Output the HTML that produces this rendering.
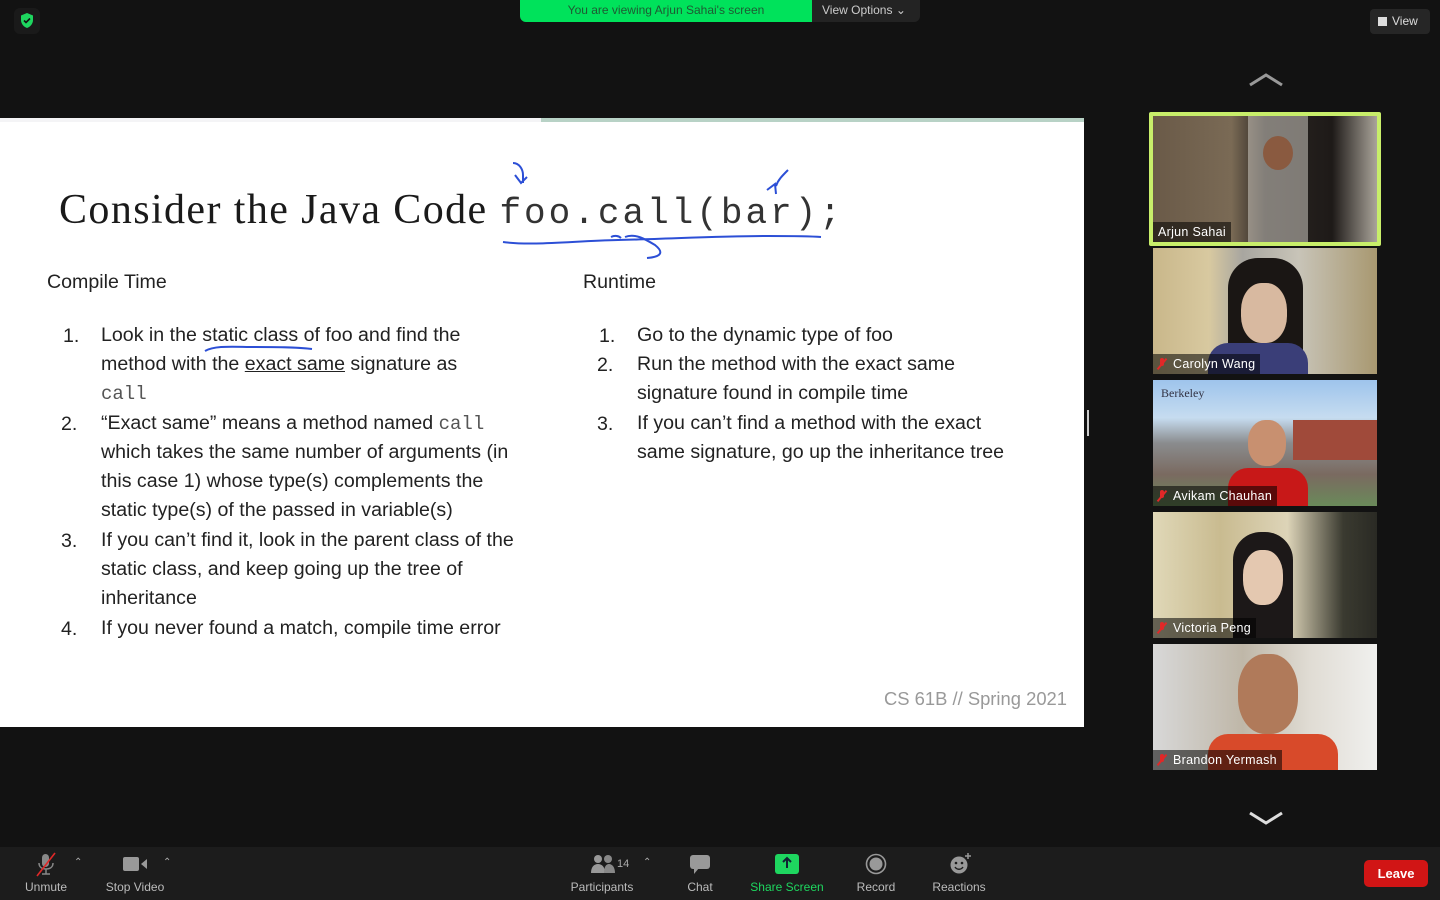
<!DOCTYPE html>
<html><head><meta charset="utf-8"><style>
*{margin:0;padding:0;box-sizing:border-box}
body{width:1440px;height:900px;background:#121212;position:relative;overflow:hidden;font-family:"Liberation Sans",sans-serif}
.abs{position:absolute}
.slide{left:0;top:118px;width:1084px;height:609px;background:#fff}
.t{position:absolute;font-size:19.6px;color:#222;white-space:nowrap}
.mono{font-family:"Liberation Mono",monospace;color:#555}
.tile{position:absolute;left:1153px;width:224px;height:126px;overflow:hidden}
.name{position:absolute;left:0;bottom:0;background:rgba(0,0,0,.55);color:#fff;font-size:12.5px;padding:3px 5px 3px 4px;letter-spacing:.3px}
.mic{display:inline-block;width:10px;height:11px;margin-right:6px;position:relative;vertical-align:-1px}
.mic:before{content:"";position:absolute;left:3px;top:0;width:4px;height:8px;background:#e02828;border-radius:2px}
.mic:after{content:"";position:absolute;left:4px;top:-1px;width:2px;height:14px;background:#e02828;transform:rotate(40deg)}
.tb{position:absolute;top:880px;color:#bbb;font-size:12px;text-align:center}
</style></head><body>
<div class="abs" style="left:14px;top:8px;width:26px;height:26px;border-radius:6px;background:#1a1a1a"></div>
<svg class="abs" style="left:20px;top:13px" width="14" height="15" viewBox="0 0 14 15"><path d="M7 0L1 2.5V7c0 4 3 7 6 8 3-1 6-4 6-8V2.5z" fill="#1ed65f"/><path d="M4 7.5l2 2 4-4" stroke="#121212" stroke-width="1.6" fill="none"/></svg>
<div class="abs" style="left:520px;top:0;width:292px;height:22px;background:#00e25b;border-radius:0 0 0 6px;color:#1e5a33;font-size:12px;text-align:center;line-height:21px">You are viewing Arjun Sahai's screen</div>
<div class="abs" style="left:812px;top:0;width:108px;height:22px;background:#232323;border-radius:0 0 6px 0;color:#ccc;font-size:12px;line-height:21px;padding-left:10px">View Options ⌄</div>
<div class="abs" style="left:1370px;top:9px;width:60px;height:25px;background:#262626;border-radius:4px;color:#ddd;font-size:12px;line-height:25px;padding-left:8px"><span style="display:inline-block;width:9px;height:9px;background:#ddd;margin-right:5px;vertical-align:-1px"></span>View</div>
<svg class="abs" style="left:1248px;top:72px" width="36" height="16"><path d="M2 13L18 3l16 10" stroke="#999" stroke-width="3" fill="none"/></svg>
<svg class="abs" style="left:1248px;top:810px" width="36" height="16"><path d="M2 3l16 10 16-10" stroke="#ddd" stroke-width="3" fill="none"/></svg>
<div class="abs" style="left:1087px;top:410px;width:2px;height:26px;background:#ccc"></div>

<div class="abs slide"></div>
<div class="abs" style="left:0;top:118px;width:541px;height:4px;background:#f4f4f6"></div>
<div class="abs" style="left:541px;top:118px;width:543px;height:4px;background:#b8d2c6"></div>
<div class="abs" style="left:59px;top:186px;font-family:'Liberation Serif',serif;font-size:42px;letter-spacing:1.4px;color:#1a1a1a;white-space:nowrap">Consider the Java Code <span class="mono" style="font-size:36px;letter-spacing:3px;color:#333">foo.call(bar);</span></div>
<svg class="abs" style="left:495px;top:155px" width="340" height="105" fill="none" stroke="#2c4fd6" stroke-width="2"><path d="M18 8c6 0 10 6 10 12v8M20 20l6 8 6-6"/><path d="M293 15c-6 6-10 10-12 16M272 35l8-6 1 10"/><path d="M8 87c30 4 70 -1 115 -2 50 -1 100 -4 150 -4 20 0 40 0 53 1"/><path d="M130 82c10-4 20 2 30 8 10 8 5 12-8 13"/><path d="M116 82c4-2 8-1 10 1"/></svg>
<div class="t" style="left:47px;top:271px">Compile Time</div>
<div class="t" style="left:583px;top:271px">Runtime</div>
<div class="t" style="left:63px;top:325px">1.</div>
<div class="t" style="left:101px;top:324px">Look in the static class of foo and find the</div>
<svg class="abs" style="left:200px;top:343px" width="120" height="12"><path d="M5 8c10-6 30-4 50-4 20 0 40 0 57 2" stroke="#2c4fd6" stroke-width="2" fill="none"/></svg>
<div class="t" style="left:101px;top:353px">method with the <u>exact same</u> signature as</div>
<div class="t mono" style="left:101px;top:383px;font-size:19px">call</div>
<div class="t" style="left:61px;top:413px">2.</div>
<div class="t" style="left:101px;top:412px">“Exact same” means a method named <span class="mono" style="font-size:19px">call</span></div>
<div class="t" style="left:101px;top:441px">which takes the same number of arguments (in</div>
<div class="t" style="left:101px;top:470px">this case 1) whose type(s) complements the</div>
<div class="t" style="left:101px;top:499px">static type(s) of the passed in variable(s)</div>
<div class="t" style="left:61px;top:530px">3.</div>
<div class="t" style="left:101px;top:529px">If you can’t find it, look in the parent class of the</div>
<div class="t" style="left:101px;top:558px">static class, and keep going up the tree of</div>
<div class="t" style="left:101px;top:587px">inheritance</div>
<div class="t" style="left:61px;top:618px">4.</div>
<div class="t" style="left:101px;top:617px">If you never found a match, compile time error</div>
<div class="t" style="left:599px;top:325px">1.</div>
<div class="t" style="left:637px;top:324px">Go to the dynamic type of foo</div>
<div class="t" style="left:597px;top:354px">2.</div>
<div class="t" style="left:637px;top:353px">Run the method with the exact same</div>
<div class="t" style="left:637px;top:382px">signature found in compile time</div>
<div class="t" style="left:597px;top:413px">3.</div>
<div class="t" style="left:637px;top:412px">If you can’t find a method with the exact</div>
<div class="t" style="left:637px;top:441px">same signature, go up the inheritance tree</div>
<div class="t" style="left:884px;top:688px;color:#999;font-size:18.4px">CS 61B // Spring 2021</div>

<div class="abs" style="left:1149px;top:112px;width:232px;height:134px;background:#c8ee6a;border-radius:2px"></div>
<div class="tile" style="top:116px;background:linear-gradient(90deg,#6a5a48 0%,#7a6a55 35%,#2a2522 50%,#1e1a18 80%,#aaa49a 100%)"><div class="abs" style="left:95px;top:0;width:60px;height:126px;background:#dcd8d0;opacity:.5"></div><div class="abs" style="left:110px;top:20px;width:30px;height:34px;border-radius:50%;background:#8a5a40"></div><div class="name" style="padding:3px 5px">Arjun Sahai</div></div>
<div class="tile" style="top:248px;background:linear-gradient(90deg,#c9b78a 0%,#d8c9a0 25%,#a8a6a0 40%,#c8c4b8 65%,#a89870 100%)"><div class="abs" style="left:75px;top:10px;width:75px;height:116px;background:#1a1614;border-radius:30px 30px 0 0"></div><div class="abs" style="left:88px;top:35px;width:46px;height:60px;border-radius:45%;background:#d8b9a0"></div><div class="abs" style="left:55px;top:95px;width:100px;height:40px;background:#3a3e78;border-radius:20px 20px 0 0"></div><div class="name"><span class="mic"></span>Carolyn Wang</div></div>
<div class="tile" style="top:380px;background:linear-gradient(180deg,#9ec4ec 0%,#c6dcf0 30%,#8a8c8e 50%,#7a6a60 75%,#6a8a5a 100%)"><div class="abs" style="left:8px;top:6px;font-family:'Liberation Serif',serif;font-size:12px;color:#334">Berkeley</div><div class="abs" style="left:140px;top:40px;width:84px;height:40px;background:#a04a3a"></div><div class="abs" style="left:95px;top:40px;width:38px;height:46px;border-radius:45%;background:#c89070"></div><div class="abs" style="left:75px;top:88px;width:80px;height:40px;background:#c81818;border-radius:20px 20px 0 0"></div><div class="name"><span class="mic"></span>Avikam Chauhan</div></div>
<div class="tile" style="top:512px;background:linear-gradient(90deg,#e0d8b8 0%,#c9bb90 30%,#ddd4b8 60%,#3a3a30 85%,#2a2a24 100%)"><div class="abs" style="left:80px;top:20px;width:60px;height:106px;background:#1c1818;border-radius:28px 28px 0 0"></div><div class="abs" style="left:90px;top:38px;width:40px;height:55px;border-radius:45%;background:#e4c8b0"></div><div class="name"><span class="mic"></span>Victoria Peng</div></div>
<div class="tile" style="top:644px;background:linear-gradient(90deg,#d8d8d8 0%,#bfb7a8 40%,#e0dcd4 70%,#f0f0ee 100%)"><div class="abs" style="left:85px;top:10px;width:60px;height:80px;border-radius:45%;background:#b07a5a"></div><div class="abs" style="left:55px;top:90px;width:130px;height:40px;background:#d84a2a;border-radius:20px 20px 0 0"></div><div class="name"><span class="mic"></span>Brandon Yermash</div></div>

<div class="abs" style="left:0;top:847px;width:1440px;height:53px;background:#1c1c1c"></div>
<svg class="abs" style="left:34px;top:852px" width="24" height="26"><rect x="8" y="2" width="7" height="13" rx="3.5" fill="#888"/><path d="M5 11c0 4 3 6 7 6s7-2 7-6M12 17v5M8 22h8" stroke="#888" stroke-width="1.5" fill="none"/><path d="M3 24L21 1" stroke="#e02828" stroke-width="1.6"/></svg>
<div class="abs" style="left:74px;top:857px;color:#aaa;font-size:10px">⌃</div>
<svg class="abs" style="left:122px;top:856px" width="26" height="16"><rect x="1" y="1" width="16" height="14" rx="2" fill="#999"/><path d="M19 8l6-5v10z" fill="#999"/></svg>
<div class="abs" style="left:163px;top:857px;color:#aaa;font-size:10px">⌃</div>
<div class="tb" style="left:14px;width:64px">Unmute</div>
<div class="tb" style="left:100px;width:70px">Stop Video</div>
<svg class="abs" style="left:590px;top:854px" width="26" height="20"><circle cx="8" cy="5" r="4" fill="#999"/><path d="M1 19c0-6 3-9 7-9s7 3 7 9z" fill="#999"/><circle cx="18" cy="5" r="4" fill="#888"/><path d="M14 19c0-6 2-9 5-9s6 3 6 9z" fill="#888"/></svg>
<div class="abs" style="left:617px;top:858px;color:#aaa;font-size:11px">14</div>
<div class="abs" style="left:643px;top:857px;color:#aaa;font-size:10px">⌃</div>
<svg class="abs" style="left:689px;top:854px" width="22" height="22"><rect x="1" y="1" width="20" height="14" rx="3" fill="#999"/><path d="M5 14v6l5-6z" fill="#999"/></svg>
<div class="abs" style="left:775px;top:854px;width:24px;height:20px;background:#1ed65f;border-radius:3px"></div>
<svg class="abs" style="left:780px;top:856px" width="14" height="16"><path d="M7 2v10M3 6l4-4 4 4" stroke="#123" stroke-width="2" fill="none"/></svg>
<svg class="abs" style="left:865px;top:853px" width="22" height="22"><circle cx="11" cy="11" r="9.5" stroke="#999" stroke-width="1.6" fill="none"/><circle cx="11" cy="11" r="6.5" fill="#999"/></svg>
<svg class="abs" style="left:948px;top:852px" width="24" height="24"><circle cx="11" cy="13" r="8.5" fill="#999"/><circle cx="8" cy="11" r="1.3" fill="#1c1c1c"/><circle cx="14" cy="11" r="1.3" fill="#1c1c1c"/><path d="M7 15c2 3 6 3 8 0" stroke="#1c1c1c" stroke-width="1.4" fill="none"/><path d="M20 1v6M17 4h6" stroke="#999" stroke-width="1.5"/></svg>
<div class="tb" style="left:562px;width:80px">Participants</div>
<div class="tb" style="left:680px;width:40px">Chat</div>
<div class="tb" style="left:744px;width:86px;color:#1ed65f">Share Screen</div>
<div class="tb" style="left:850px;width:52px">Record</div>
<div class="tb" style="left:926px;width:66px">Reactions</div>
<div class="abs" style="left:1364px;top:860px;width:64px;height:27px;background:#d11515;border-radius:5px;color:#fff;font-weight:bold;font-size:13px;text-align:center;line-height:27px">Leave</div>
</body></html>
